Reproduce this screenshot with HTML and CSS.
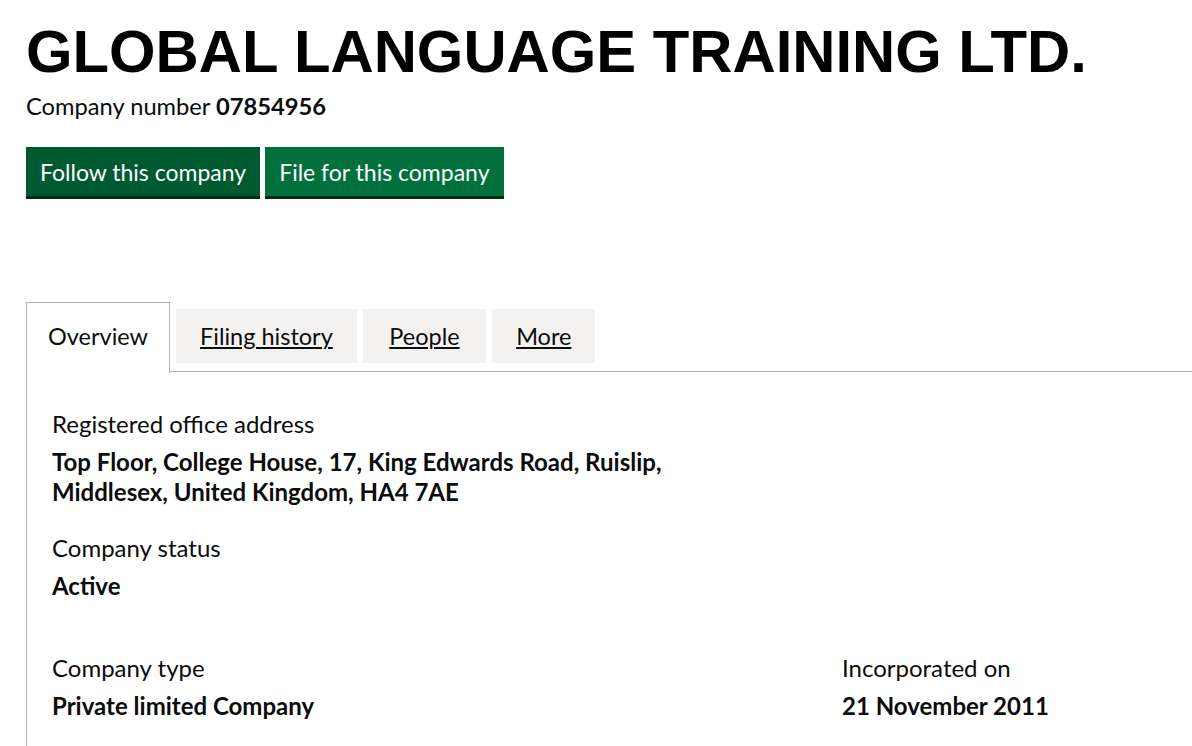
FILE: index.html
```html
<!DOCTYPE html>
<html lang="en">
<head>
<meta charset="utf-8">
<title>GLOBAL LANGUAGE TRAINING LTD.</title>
<link rel="stylesheet" href="styles.css">
</head>
<body>
<main class="page">
  <h1 class="company-name">GLOBAL LANGUAGE TRAINING LTD.</h1>
  <p class="company-number">Company number <strong>07854956</strong></p>
  <div class="actions">
    <a class="button button-follow" href="#">Follow this company</a>
    <a class="button" href="#">File for this company</a>
  </div>

  <div class="tabs">
    <ul class="tab-list">
      <li class="tab tab-selected"><span>Overview</span></li>
      <li class="tab"><a href="#">Filing history</a></li>
      <li class="tab tab-people"><a href="#">People</a></li>
      <li class="tab"><a href="#">More</a></li>
    </ul>
    <section class="panel">
      <dl class="detail">
        <dt>Registered office address</dt>
        <dd>Top Floor, College House, 17, King Edwards Road, Ruislip,<br>Middlesex, United Kingdom, HA4 7AE</dd>
      </dl>
      <dl class="detail">
        <dt>Company status</dt>
        <dd>Active</dd>
      </dl>
      <div class="detail-row">
        <dl class="detail">
          <dt>Company type</dt>
          <dd>Private limited Company</dd>
        </dl>
        <dl class="detail">
          <dt>Incorporated on</dt>
          <dd>21 November 2011</dd>
        </dl>
      </div>
    </section>
  </div>
</main>
</body>
</html>
```
FILE: styles.css
```css
html, body {
  margin: 0;
  padding: 0;
  background: #ffffff;
  overflow: hidden;
}

body {
  color: #0b0c0c;
  font-family: Lato, "Noto Sans", sans-serif;
  font-size: 24px;
  line-height: 30px;
}

.page {
  padding: 22px 0 0 26px;
}

.company-name {
  margin: 0;
  font-family: "Liberation Sans", Arial, sans-serif;
  font-weight: 700;
  font-size: 59.8px;
  line-height: 60px;
  color: #000000;
}

.company-number {
  margin: 9px 0 0;
  font-size: 23.7px;
  line-height: 30px;
}

.company-number strong {
  font-weight: 700;
}

.actions {
  display: flex;
  gap: 5px;
  margin-top: 26px;
}

.button {
  display: inline-block;
  padding: 13px 14px 11px;
  font-size: 23px;
  line-height: 25px;
  color: #ffffff;
  background: #00703c;
  text-decoration: none;
  box-shadow: 0 3px 0 #002d18;
}

.button-follow {
  background: #005a30;
}

.tabs {
  margin-top: 106px;
}

.tab-list {
  display: flex;
  align-items: flex-start;
  gap: 6px;
  margin: 0;
  padding: 0;
  list-style: none;
  height: 69px;
  border-bottom: 1px solid #b1b4b6;
}

.tab {
  margin-top: 7px;
  padding: 12px 24px;
  background: #f3f2f1;
  height: 30px;
  font-size: 23.5px;
}

.tab-people {
  padding: 12px 26.5px;
}

.tab a {
  color: #0b0c0c;
  text-decoration: underline;
  text-decoration-thickness: 2px;
  text-underline-offset: 2px;
}

.tab-selected {
  margin-top: 0;
  height: 30px;
  padding: 18px 21px 22px;
  background: #ffffff;
  border: 1px solid #b1b4b6;
  border-bottom: 0;
}

.panel {
  border-left: 1px solid #b1b4b6;
  padding: 37px 25px 26px;
}

.detail {
  margin: 0;
}

.detail dt {
  font-weight: 400;
}

.detail dd {
  margin: 8px 0 0;
  font-weight: 700;
}

.detail + .detail {
  margin-top: 26px;
}

.detail-row {
  display: grid;
  grid-template-columns: 790px 1fr;
  margin-top: 52px;
}

.detail-row .detail + .detail {
  margin-top: 0;
}
```
